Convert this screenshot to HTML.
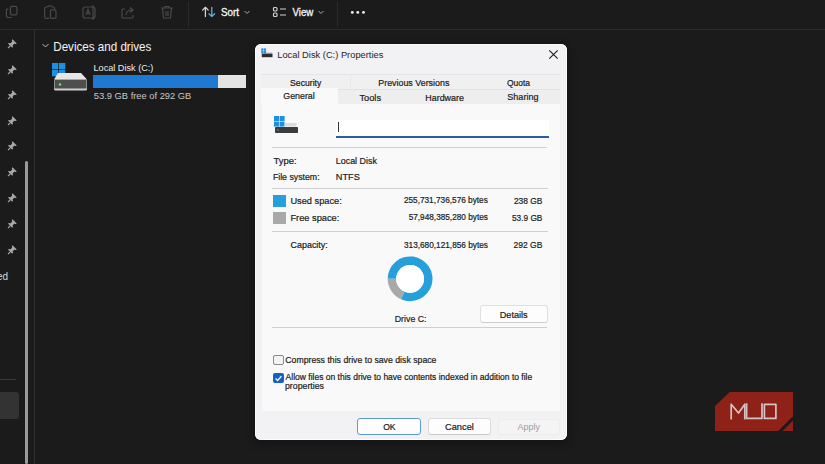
<!DOCTYPE html>
<html><head><meta charset="utf-8"><style>
html,body{margin:0;padding:0;width:825px;height:464px;overflow:hidden;background:#1c1c1c;font-family:"Liberation Sans", sans-serif;}
</style></head><body>
<div style="position:absolute;left:0px;top:0px;width:825px;height:464px;background:#1b1b1c"></div>
<div style="position:absolute;left:0px;top:29px;width:825px;height:1px;background:#2c2c2c"></div>
<div style="position:absolute;left:188px;top:2px;width:1px;height:25px;background:#2a2a2a"></div>
<div style="position:absolute;left:337px;top:2px;width:1px;height:25px;background:#2a2a2a"></div>
<div style="position:absolute;left:34px;top:30px;width:1px;height:434px;background:#2e2e2e"></div>
<div style="position:absolute;left:25px;top:161px;width:3px;height:303px;background:#9b9b9b;border-radius:2px"></div>
<svg style="position:absolute;left:0;top:0" width="190" height="29" viewBox="0 0 190 29">
<g fill="none" stroke="#4a4a4a" stroke-width="1.2">
 <rect x="10.4" y="6.4" width="6.6" height="8.4" rx="1.6"/>
 <path d="M8.2 8.8 a1.7 1.7 0 0 0 -1.8 1.7 v5.3 a1.7 1.7 0 0 0 1.7 1.7 h3.6"/>
 <path d="M46.8 7 h-0.6 a1.5 1.5 0 0 0 -1.5 1.5 v8.4 a1.5 1.5 0 0 0 1.5 1.5 h3 M52.8 7 h0.2 a1.5 1.5 0 0 1 1.5 1.5 v0.8"/>
 <path d="M47.4 7.2 q0 -1.3 2.6 -1.3 q2.6 0 2.6 1.3"/>
 <rect x="50.4" y="9.8" width="5.6" height="8.6" rx="1.2"/>
 <rect x="83" y="7" width="12" height="11" rx="2"/>
 <path d="M86 15 l2 -5.5 l2 5.5 M87 13.5 h2"/>
 <path d="M93 5 v15"/>
 <path d="M125 9 h-2 a1 1 0 0 0 -1 1 v7 a1 1 0 0 0 1 1 h9 a1 1 0 0 0 1 -1 v-2"/>
 <path d="M126 15 q0 -5 6 -5 M130 7.5 l3 2.5 l-3 2.5"/>
 <path d="M161 8 h12 M165 8 v-1.5 h4 v1.5 M162.5 8 l1 10 h7 l1 -10 M166 11 v5 M168 11 v5"/>
</g></svg>
<svg style="position:absolute;left:200px;top:5px" width="18" height="14" viewBox="0 0 18 14">
<g fill="none" stroke-width="1.25" stroke-linecap="round" stroke-linejoin="round">
<path d="M5.4 2.3 v9.3 M2.6 5.1 l2.8 -2.8 l2.8 2.8" stroke="#d6d6d6"/>
<path d="M11.8 2.3 v9.3 M9 8.8 l2.8 2.8 l2.8 -2.8" stroke="#62b4ea"/>
</g></svg>
<div style="position:absolute;left:220.91px;top:7.73px;font-size:9.888px;line-height:9.888px;color:#f2f2f2;white-space:nowrap;transform:scaleY(1.07);transform-origin:0 8.37px;-webkit-text-stroke:0.3px #f2f2f2;">Sort</div>
<svg style="position:absolute;left:243px;top:9px" width="8" height="6" viewBox="0 0 8 6"><path d="M1.5 2 l2.5 2.5 l2.5 -2.5" fill="none" stroke="#aaa" stroke-width="1"/></svg>
<svg style="position:absolute;left:272px;top:6px" width="16" height="12" viewBox="0 0 16 12">
<g fill="none" stroke="#d0d0d0" stroke-width="1.2">
<rect x="1.5" y="1.5" width="3.5" height="3.5" rx="1"/>
<rect x="1.5" y="7" width="3.5" height="3.5" rx="1"/>
<path d="M8 3 h6 M8 9 h6"/>
</g></svg>
<div style="position:absolute;left:292.50px;top:7.91px;font-size:9.673px;line-height:9.673px;color:#f2f2f2;white-space:nowrap;transform:scaleY(1.07);transform-origin:0 8.19px;-webkit-text-stroke:0.3px #f2f2f2;">View</div>
<svg style="position:absolute;left:317px;top:9px" width="8" height="6" viewBox="0 0 8 6"><path d="M1.5 2 l2.5 2.5 l2.5 -2.5" fill="none" stroke="#aaa" stroke-width="1"/></svg>
<svg style="position:absolute;left:345px;top:6px" width="25" height="13"><circle cx="7.3" cy="6.4" r="1.45" fill="#f0f0f0"/><circle cx="12.8" cy="6.4" r="1.45" fill="#f0f0f0"/><circle cx="18.5" cy="6.4" r="1.45" fill="#f0f0f0"/></svg>
<svg style="position:absolute;left:7px;top:38px" width="11" height="11" viewBox="0 0 11 11">
<g fill="#a8a8a8"><path d="M5.5 1.2 l4.3 4.3 l-1.1 0.6 l-1.4 -0.4 l-1.6 1.6 l0.2 1.8 l-0.7 0.7 l-4.1 -4.1 l0.7 -0.7 l1.8 0.2 l1.6 -1.6 l-0.4 -1.4 z"/>
<path d="M3.2 7.8 l-2.2 2.2" stroke="#a8a8a8" stroke-width="1.1"/></g></svg>
<svg style="position:absolute;left:7px;top:64px" width="11" height="11" viewBox="0 0 11 11">
<g fill="#a8a8a8"><path d="M5.5 1.2 l4.3 4.3 l-1.1 0.6 l-1.4 -0.4 l-1.6 1.6 l0.2 1.8 l-0.7 0.7 l-4.1 -4.1 l0.7 -0.7 l1.8 0.2 l1.6 -1.6 l-0.4 -1.4 z"/>
<path d="M3.2 7.8 l-2.2 2.2" stroke="#a8a8a8" stroke-width="1.1"/></g></svg>
<svg style="position:absolute;left:7px;top:89px" width="11" height="11" viewBox="0 0 11 11">
<g fill="#a8a8a8"><path d="M5.5 1.2 l4.3 4.3 l-1.1 0.6 l-1.4 -0.4 l-1.6 1.6 l0.2 1.8 l-0.7 0.7 l-4.1 -4.1 l0.7 -0.7 l1.8 0.2 l1.6 -1.6 l-0.4 -1.4 z"/>
<path d="M3.2 7.8 l-2.2 2.2" stroke="#a8a8a8" stroke-width="1.1"/></g></svg>
<svg style="position:absolute;left:7px;top:115px" width="11" height="11" viewBox="0 0 11 11">
<g fill="#a8a8a8"><path d="M5.5 1.2 l4.3 4.3 l-1.1 0.6 l-1.4 -0.4 l-1.6 1.6 l0.2 1.8 l-0.7 0.7 l-4.1 -4.1 l0.7 -0.7 l1.8 0.2 l1.6 -1.6 l-0.4 -1.4 z"/>
<path d="M3.2 7.8 l-2.2 2.2" stroke="#a8a8a8" stroke-width="1.1"/></g></svg>
<svg style="position:absolute;left:7px;top:140px" width="11" height="11" viewBox="0 0 11 11">
<g fill="#a8a8a8"><path d="M5.5 1.2 l4.3 4.3 l-1.1 0.6 l-1.4 -0.4 l-1.6 1.6 l0.2 1.8 l-0.7 0.7 l-4.1 -4.1 l0.7 -0.7 l1.8 0.2 l1.6 -1.6 l-0.4 -1.4 z"/>
<path d="M3.2 7.8 l-2.2 2.2" stroke="#a8a8a8" stroke-width="1.1"/></g></svg>
<svg style="position:absolute;left:7px;top:166px" width="11" height="11" viewBox="0 0 11 11">
<g fill="#a8a8a8"><path d="M5.5 1.2 l4.3 4.3 l-1.1 0.6 l-1.4 -0.4 l-1.6 1.6 l0.2 1.8 l-0.7 0.7 l-4.1 -4.1 l0.7 -0.7 l1.8 0.2 l1.6 -1.6 l-0.4 -1.4 z"/>
<path d="M3.2 7.8 l-2.2 2.2" stroke="#a8a8a8" stroke-width="1.1"/></g></svg>
<svg style="position:absolute;left:7px;top:192px" width="11" height="11" viewBox="0 0 11 11">
<g fill="#a8a8a8"><path d="M5.5 1.2 l4.3 4.3 l-1.1 0.6 l-1.4 -0.4 l-1.6 1.6 l0.2 1.8 l-0.7 0.7 l-4.1 -4.1 l0.7 -0.7 l1.8 0.2 l1.6 -1.6 l-0.4 -1.4 z"/>
<path d="M3.2 7.8 l-2.2 2.2" stroke="#a8a8a8" stroke-width="1.1"/></g></svg>
<svg style="position:absolute;left:7px;top:218px" width="11" height="11" viewBox="0 0 11 11">
<g fill="#a8a8a8"><path d="M5.5 1.2 l4.3 4.3 l-1.1 0.6 l-1.4 -0.4 l-1.6 1.6 l0.2 1.8 l-0.7 0.7 l-4.1 -4.1 l0.7 -0.7 l1.8 0.2 l1.6 -1.6 l-0.4 -1.4 z"/>
<path d="M3.2 7.8 l-2.2 2.2" stroke="#a8a8a8" stroke-width="1.1"/></g></svg>
<svg style="position:absolute;left:7px;top:244px" width="11" height="11" viewBox="0 0 11 11">
<g fill="#a8a8a8"><path d="M5.5 1.2 l4.3 4.3 l-1.1 0.6 l-1.4 -0.4 l-1.6 1.6 l0.2 1.8 l-0.7 0.7 l-4.1 -4.1 l0.7 -0.7 l1.8 0.2 l1.6 -1.6 l-0.4 -1.4 z"/>
<path d="M3.2 7.8 l-2.2 2.2" stroke="#a8a8a8" stroke-width="1.1"/></g></svg>
<div style="position:absolute;left:-3px;top:271.54px;font-size:10px;line-height:10px;color:#d8d8d8;white-space:nowrap;">ed</div>
<div style="position:absolute;left:0px;top:379px;width:16px;height:1px;background:#3a3a3a"></div>
<div style="position:absolute;left:0px;top:392px;width:19px;height:27px;background:#333333;border-radius:0 3px 3px 0"></div>
<svg style="position:absolute;left:41px;top:41px" width="9" height="9" viewBox="0 0 9 9"><path d="M1.5 3 l3 3 l3 -3" fill="none" stroke="#bdbdbd" stroke-width="1"/></svg>
<div style="position:absolute;left:53.27px;top:40.76px;font-size:11.621px;line-height:11.621px;color:#f4f4f4;white-space:nowrap;transform:scaleY(1.15);transform-origin:0 9.84px;">Devices and drives</div>
<svg style="position:absolute;left:50px;top:61px" width="40" height="32" viewBox="0 0 40 32">
<g fill="#1e90e0">
<rect x="2" y="2" width="6.3" height="6.3"/><rect x="9" y="2" width="6.3" height="6.3"/>
<rect x="2" y="9" width="6.3" height="6.3"/><rect x="9" y="9" width="6.3" height="6.3"/>
</g>
<path d="M8 12 h23 l6 6.5 h-33 z" fill="#e6e6e6"/>
<rect x="4" y="18.5" width="33" height="11" rx="1.5" fill="#d0d0d0"/>
<rect x="4.5" y="19" width="32" height="8.5" fill="#4e4e4e"/>
<circle cx="10" cy="23.5" r="1.3" fill="#6de06d"/>
</svg>
<div style="position:absolute;left:93.47px;top:63.75px;font-size:9.158px;line-height:9.158px;color:#ececec;white-space:nowrap;transform:scaleY(1.05);transform-origin:0 7.75px;">Local Disk (C:)</div>
<div style="position:absolute;left:93px;top:75px;width:153px;height:13px;background:#e3e3e3"></div>
<div style="position:absolute;left:93px;top:75px;width:125px;height:13px;background:#1f78d1"></div>
<div style="position:absolute;left:93.83px;top:92.39px;font-size:9.344px;line-height:9.344px;color:#c8c8c8;white-space:nowrap;transform:scaleY(1.06);transform-origin:0 7.91px;">53.9 GB free of 292 GB</div>
<svg style="position:absolute;left:715px;top:392px" width="79" height="40" viewBox="0 0 79 40">
<path d="M14.8 0 H78 V24.3 L63.3 39 H0 V14 Z" fill="#8e2118"/>
<path d="M67.6 39 L78 28.6 V39 Z" fill="#8e2118"/>
<g fill="none" stroke="#d4c4c4" stroke-width="1.7" stroke-linejoin="round" stroke-linecap="square">
<path d="M16.2 26.6 V12.2 L23.5 21 L29.8 12.2 V26.6"/>
<path d="M31.6 12.2 V26.4 H47 V12.2"/>
<path d="M49.4 12.4 H60.9 V26.4 H49.4 Z"/>
</g></svg>
<div style="position:absolute;left:254px;top:43px;width:314px;height:398px;background:#161616;border-radius:7px;box-shadow:0 3px 10px rgba(0,0,0,0.3)"></div>
<div style="position:absolute;left:255px;top:44px;width:312px;height:396px;background:#f2f2f4;border-radius:6px;box-shadow:inset 0 0 0 1px #fbfbfc"></div>
<svg style="position:absolute;left:260px;top:47px" width="14" height="12" viewBox="0 0 14 12">
<g fill="#1e8fe0"><rect x="1.2" y="1.4" width="2.3" height="2.3"/><rect x="3.8" y="1.4" width="2.3" height="2.3"/><rect x="1.2" y="4.0" width="2.3" height="2.3"/><rect x="3.8" y="4.0" width="2.3" height="2.3"/></g>
<rect x="6.2" y="5.2" width="6" height="1.4" fill="#cfcfcf"/>
<rect x="1.8" y="6.6" width="10.7" height="3.6" fill="#2e2e2e"/>
</svg>
<div style="position:absolute;left:277.25px;top:50.71px;font-size:9.326px;line-height:9.326px;color:#262626;white-space:nowrap;">Local Disk (C:) Properties</div>
<svg style="position:absolute;left:548px;top:49px" width="11" height="11" viewBox="0 0 11 11"><path d="M1.3 1.3 l8.4 8.4 M9.7 1.3 l-8.4 8.4" stroke="#1e1e1e" stroke-width="1.15"/></svg>
<div style="position:absolute;left:261px;top:74px;width:299px;height:15px;background:#f0f0f0;border-top:1px solid #e4e4e4"></div>
<div style="position:absolute;left:261px;top:89px;width:299px;height:15px;background:#eeeeee;border-top:1px solid #e2e2e2"></div>
<div style="position:absolute;left:261px;top:88px;width:77px;height:17px;background:#f9f9f9"></div>
<div style="position:absolute;left:350px;top:75px;width:1px;height:13px;background:#e8e8e8"></div>
<div style="position:absolute;left:290.07px;top:79.08px;font-size:8.652px;line-height:8.652px;color:#1b1b1b;white-space:nowrap;-webkit-text-stroke:0.2px #1b1b1b;">Security</div>
<div style="position:absolute;left:378.29px;top:78.87px;font-size:8.897px;line-height:8.897px;color:#1b1b1b;white-space:nowrap;-webkit-text-stroke:0.2px #1b1b1b;">Previous Versions</div>
<div style="position:absolute;left:506.98px;top:79.03px;font-size:8.464px;line-height:8.464px;color:#1b1b1b;white-space:nowrap;-webkit-text-stroke:0.2px #1b1b1b;">Quota</div>
<div style="position:absolute;left:283.26px;top:91.59px;font-size:8.866px;line-height:8.866px;color:#1b1b1b;white-space:nowrap;-webkit-text-stroke:0.2px #1b1b1b;">General</div>
<div style="position:absolute;left:359.52px;top:93.50px;font-size:9.211px;line-height:9.211px;color:#1b1b1b;white-space:nowrap;-webkit-text-stroke:0.2px #1b1b1b;">Tools</div>
<div style="position:absolute;left:425.29px;top:93.64px;font-size:8.931px;line-height:8.931px;color:#1b1b1b;white-space:nowrap;-webkit-text-stroke:0.2px #1b1b1b;">Hardware</div>
<div style="position:absolute;left:507.35px;top:93.25px;font-size:9.039px;line-height:9.039px;color:#1b1b1b;white-space:nowrap;-webkit-text-stroke:0.2px #1b1b1b;">Sharing</div>
<div style="position:absolute;left:261px;top:104px;width:299px;height:307px;background:#f9f9f9;box-shadow:inset 1px 0 0 #f0f0f0"></div>
<svg style="position:absolute;left:272px;top:114px" width="28" height="22" viewBox="0 0 28 22">
<g fill="#1e8ee0"><rect x="2" y="2" width="5" height="5"/><rect x="7.6" y="2" width="5" height="5"/><rect x="2" y="7.6" width="5" height="5"/><rect x="7.6" y="7.6" width="5" height="5"/></g>
<rect x="12.5" y="9" width="12" height="3.5" fill="#dcdcdc"/>
<rect x="3" y="13" width="23" height="6" rx="0.8" fill="#3c3c3c"/>
<circle cx="6" cy="16" r="0.8" fill="#5aa05a"/>
</svg>
<div style="position:absolute;left:336px;top:120px;width:213px;height:16px;background:#ffffff;border-bottom:2px solid #2860a2"></div>
<div style="position:absolute;left:338px;top:122px;width:1px;height:10px;background:#333"></div>
<div style="position:absolute;left:272px;top:147px;width:275px;height:1px;background:#d0d0d0"></div>
<div style="position:absolute;left:272px;top:188px;width:276px;height:1px;background:#d0d0d0"></div>
<div style="position:absolute;left:272px;top:231px;width:276px;height:1px;background:#d0d0d0"></div>
<div style="position:absolute;left:272px;top:327px;width:275px;height:1px;background:#d0d0d0"></div>
<div style="position:absolute;left:273.41px;top:155.97px;font-size:9.485px;line-height:9.485px;color:#1b1b1b;white-space:nowrap;-webkit-text-stroke:0.2px #1b1b1b;">Type:</div>
<div style="position:absolute;left:335.78px;top:157.03px;font-size:8.940px;line-height:8.940px;color:#1b1b1b;white-space:nowrap;-webkit-text-stroke:0.2px #1b1b1b;">Local Disk</div>
<div style="position:absolute;left:272.90px;top:172.88px;font-size:8.760px;line-height:8.760px;color:#1b1b1b;white-space:nowrap;-webkit-text-stroke:0.2px #1b1b1b;">File system:</div>
<div style="position:absolute;left:335.76px;top:173.28px;font-size:9.237px;line-height:9.237px;color:#1b1b1b;white-space:nowrap;-webkit-text-stroke:0.2px #1b1b1b;">NTFS</div>
<div style="position:absolute;left:273px;top:195px;width:13px;height:12px;background:#26a0da"></div>
<div style="position:absolute;left:273px;top:212px;width:13px;height:12px;background:#a9a9a9"></div>
<div style="position:absolute;left:290.46px;top:196.79px;font-size:9.221px;line-height:9.221px;color:#1b1b1b;white-space:nowrap;-webkit-text-stroke:0.2px #1b1b1b;">Used space:</div>
<div style="position:absolute;left:290.46px;top:213.56px;font-size:9.256px;line-height:9.256px;color:#1b1b1b;white-space:nowrap;-webkit-text-stroke:0.2px #1b1b1b;">Free space:</div>
<div style="position:absolute;left:403.89px;top:196.80px;font-size:8.266px;line-height:8.266px;color:#1b1b1b;white-space:nowrap;-webkit-text-stroke:0.2px #1b1b1b;">255,731,736,576 bytes</div>
<div style="position:absolute;left:408.67px;top:213.92px;font-size:8.249px;line-height:8.249px;color:#1b1b1b;white-space:nowrap;-webkit-text-stroke:0.2px #1b1b1b;">57,948,385,280 bytes</div>
<div style="position:absolute;left:513.88px;top:196.67px;font-size:8.419px;line-height:8.419px;color:#1b1b1b;white-space:nowrap;-webkit-text-stroke:0.2px #1b1b1b;">238 GB</div>
<div style="position:absolute;left:511.97px;top:213.88px;font-size:8.296px;line-height:8.296px;color:#1b1b1b;white-space:nowrap;-webkit-text-stroke:0.2px #1b1b1b;">53.9 GB</div>
<div style="position:absolute;left:290.55px;top:240.94px;font-size:8.933px;line-height:8.933px;color:#1b1b1b;white-space:nowrap;-webkit-text-stroke:0.2px #1b1b1b;">Capacity:</div>
<div style="position:absolute;left:403.97px;top:241.51px;font-size:8.257px;line-height:8.257px;color:#1b1b1b;white-space:nowrap;-webkit-text-stroke:0.2px #1b1b1b;">313,680,121,856 bytes</div>
<div style="position:absolute;left:513.57px;top:241.10px;font-size:8.511px;line-height:8.511px;color:#1b1b1b;white-space:nowrap;-webkit-text-stroke:0.2px #1b1b1b;">292 GB</div>
<svg style="position:absolute;left:0;top:0" width="825" height="464"><path d="M387.70 278.80 A22.4 22.4 0 1 1 400.99 299.26 L404.45 291.50 A13.9 13.9 0 1 0 396.20 278.80 Z" fill="#26a0da"/><path d="M400.99 299.26 A22.4 22.4 0 0 1 387.70 278.80 L396.20 278.80 A13.9 13.9 0 0 0 404.45 291.50 Z" fill="#a9a9a9"/><circle cx="410.1" cy="278.8" r="13.9" fill="#ffffff"/></svg>
<div style="position:absolute;left:394.69px;top:315.02px;font-size:8.837px;line-height:8.837px;color:#1b1b1b;white-space:nowrap;-webkit-text-stroke:0.2px #1b1b1b;">Drive C:</div>
<div style="position:absolute;left:480px;top:305px;width:68px;height:17.5px;background:#fdfdfd;border:1px solid #e0e0e0;border-bottom-color:#cdcdcd;border-radius:3px;box-sizing:border-box"></div>
<div style="position:absolute;left:499.77px;top:310.58px;font-size:9.116px;line-height:9.116px;color:#1b1b1b;white-space:nowrap;-webkit-text-stroke:0.2px #1b1b1b;">Details</div>
<div style="position:absolute;left:273px;top:355px;width:11px;height:10px;background:#f3f3f3;border:1px solid #8a8a8a;border-radius:2px;box-sizing:border-box"></div>
<div style="position:absolute;left:273px;top:372.5px;width:11px;height:10.5px;background:#1560c4;border-radius:2px"></div>
<svg style="position:absolute;left:273px;top:372.5px" width="11" height="10.5" viewBox="0 0 11 10.5"><path d="M2.6 5.5 l2 2 l3.8 -4.2" fill="none" stroke="#fff" stroke-width="1.3"/></svg>
<div style="position:absolute;left:285.26px;top:355.61px;font-size:8.725px;line-height:8.725px;color:#1b1b1b;white-space:nowrap;-webkit-text-stroke:0.2px #1b1b1b;">Compress this drive to save disk space</div>
<div style="position:absolute;left:285.60px;top:372.89px;font-size:8.519px;line-height:8.519px;color:#1b1b1b;white-space:nowrap;-webkit-text-stroke:0.2px #1b1b1b;">Allow files on this drive to have contents indexed in addition to file</div>
<div style="position:absolute;left:284.99px;top:382.37px;font-size:8.779px;line-height:8.779px;color:#1b1b1b;white-space:nowrap;-webkit-text-stroke:0.2px #1b1b1b;">properties</div>
<div style="position:absolute;left:357px;top:418px;width:64px;height:17px;background:#fdfdfd;border:1.5px solid #5a9ad6;border-radius:3px;box-sizing:border-box"></div>
<div style="position:absolute;left:383.17px;top:422.70px;font-size:8.623px;line-height:8.623px;color:#1b1b1b;white-space:nowrap;-webkit-text-stroke:0.2px #1b1b1b;">OK</div>
<div style="position:absolute;left:428px;top:418px;width:63px;height:17px;background:#fdfdfd;border:1px solid #dadada;border-bottom-color:#c8c8c8;border-radius:3px;box-sizing:border-box"></div>
<div style="position:absolute;left:445.04px;top:422.76px;font-size:9.267px;line-height:9.267px;color:#1b1b1b;white-space:nowrap;-webkit-text-stroke:0.2px #1b1b1b;">Cancel</div>
<div style="position:absolute;left:498px;top:419px;width:62px;height:16px;background:#f4f4f5;border:1px solid #ededee;border-radius:3px;box-sizing:border-box"></div>
<div style="position:absolute;left:517.60px;top:423.02px;font-size:8.960px;line-height:8.960px;color:#9d9d9d;white-space:nowrap;">Apply</div>
</body></html>
